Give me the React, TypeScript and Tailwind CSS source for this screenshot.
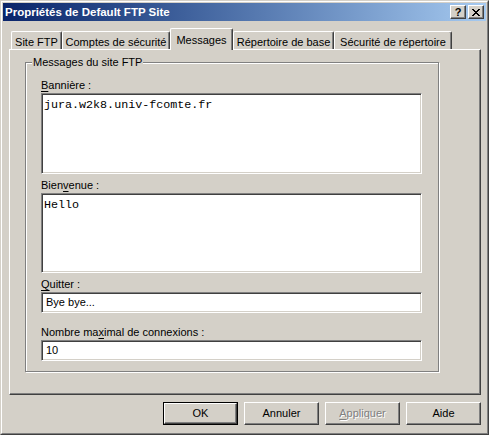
import React from 'react';

const sunken =
  'border border-t-[#808080] border-l-[#808080] border-r-white border-b-white shadow-[inset_1px_1px_0_#404040,inset_-1px_-1px_0_#d4d0c8] bg-white';
const raised =
  'border border-t-white border-l-white border-r-[#404040] border-b-[#404040] shadow-[inset_-1px_-1px_0_#808080]';

function Label({ before, accel, after }: { before: string; accel: string; after: string }) {
  return (
    <div className="h-[13px] leading-[13px] text-black">
      {before}
      <span className="underline underline-offset-2">{accel}</span>
      {after}
    </div>
  );
}

function Tab({ label, width, active }: { label: string; width: number; active?: boolean }) {
  return (
    <div
      style={{ width }}
      className={
        active
          ? 'relative z-10 h-[22px] -mb-px bg-[#d4d0c8] border-t border-l border-t-white border-l-white border-r border-r-[#404040] shadow-[inset_-1px_0_0_#808080] rounded-tl-[2px] rounded-tr-[2px] flex items-start justify-center pt-[3px]'
          : 'h-[18px] bg-[#d4d0c8] border-t border-l border-t-white border-l-white border-r border-r-[#404040] shadow-[inset_-1px_0_0_#808080] rounded-tl-[2px] rounded-tr-[2px] flex items-start justify-center pt-[2px]'
      }
    >
      {label}
    </div>
  );
}

function Button({ children, def }: { children: React.ReactNode; def?: boolean }) {
  return (
    <div className={def ? 'border border-black' : ''}>
      <div
        className={`${raised} ${def ? 'w-[73px] h-[21px]' : 'w-[75px] h-[23px]'} flex items-center justify-center bg-[#d4d0c8]`}
      >
        {children}
      </div>
    </div>
  );
}

export default function App() {
  return (
    <div className="w-[489px] h-[435px] bg-[#d4d0c8] text-[11px] text-black" style={{ fontFamily: '"Liberation Sans", Arial, sans-serif' }}>
      <div className="w-full h-full border border-t-[#d4d0c8] border-l-[#d4d0c8] border-r-[#404040] border-b-[#404040]">
        <div className="w-full h-full border border-t-white border-l-white border-r-[#808080] border-b-[#808080] p-px flex flex-col">
          {/* title bar */}
          <div className="h-[18px] bg-gradient-to-r from-[#0a246a] to-[#a6caf0] flex items-center pl-[2px] pr-[2px]">
            <span className="text-white font-bold text-[11.5px] flex-1 pt-px">Propriétés de Default FTP Site</span>
            <div className={`${raised} w-[16px] h-[14px] bg-[#d4d0c8] flex items-center justify-center font-bold text-[11px] leading-none`}>?</div>
            <div className={`${raised} w-[16px] h-[14px] bg-[#d4d0c8] flex items-center justify-center ml-[2px]`}>
              <svg width="8" height="7" viewBox="0 0 8 7" shapeRendering="crispEdges">
                <path d="M0 0h2v1h-2zM6 0h2v1h-2zM1 1h2v1h-2zM5 1h2v1h-2zM2 2h4v1h-4zM3 3h2v1h-2zM2 4h4v1h-4zM1 5h2v1h-2zM5 5h2v1h-2zM0 6h2v1h-2zM6 6h2v1h-2z" fill="#000" />
              </svg>
            </div>
          </div>

          <div className="pl-[6px] pt-[7px]">
            {/* tabs */}
            <div className="flex items-end h-[21px] pl-[2px]">
              <Tab label="Site FTP" width={51} />
              <Tab label="Comptes de sécurité" width={108} />
              <Tab label="Messages" width={63} active />
              <Tab label="Répertoire de base" width={101} />
              <Tab label="Sécurité de répertoire" width={118} />
            </div>

            {/* panel */}
            <div className={`${raised} w-[472px] h-[346px] pt-[12px] pl-[15px]`}>
              <div className="relative w-[414px] h-[310px] border border-[#808080] shadow-[inset_1px_1px_0_white,1px_1px_0_white] pt-[16px] pl-[15px]">
                <span className="absolute -top-[7px] left-[6px] bg-[#d4d0c8] px-px leading-[13px]">Messages du site FTP</span>

                <Label before="" accel="B" after="annière :" />
                <div className={`${sunken} w-[381px] h-[81px] mt-px pl-[2px] pt-[5px] text-[11.7px] leading-[13px]`} style={{ fontFamily: '"Liberation Mono", "Courier New", monospace' }}>
                  jura.w2k8.univ-fcomte.fr
                </div>

                <div className="mt-[5px]">
                  <Label before="Bien" accel="v" after="enue :" />
                </div>
                <div className={`${sunken} w-[381px] h-[80px] mt-px pl-[2px] pt-[5px] text-[11.7px] leading-[13px]`} style={{ fontFamily: '"Liberation Mono", "Courier New", monospace' }}>
                  Hello
                </div>

                <div className="mt-[5px]">
                  <Label before="" accel="Q" after="uitter :" />
                </div>
                <div className={`${sunken} w-[381px] h-[21px] mt-px pl-[4px] flex items-center`}>Bye bye...</div>

                <div className="mt-[13px]">
                  <Label before="Nombre ma" accel="x" after="imal de connexions :" />
                </div>
                <div className={`${sunken} w-[381px] h-[21px] mt-px pl-[4px] flex items-center`}>10</div>
              </div>
            </div>

            {/* buttons */}
            <div className="flex justify-end gap-[6px] mt-[7px] w-[472px]">
              <Button def>OK</Button>
              <Button>Annuler</Button>
              <Button>
                <span className="text-[#808080] [text-shadow:1px_1px_0_white]">
                  <span className="underline underline-offset-2">A</span>ppliquer
                </span>
              </Button>
              <Button>Aide</Button>
            </div>
          </div>
        </div>
      </div>
    </div>
  );
}
